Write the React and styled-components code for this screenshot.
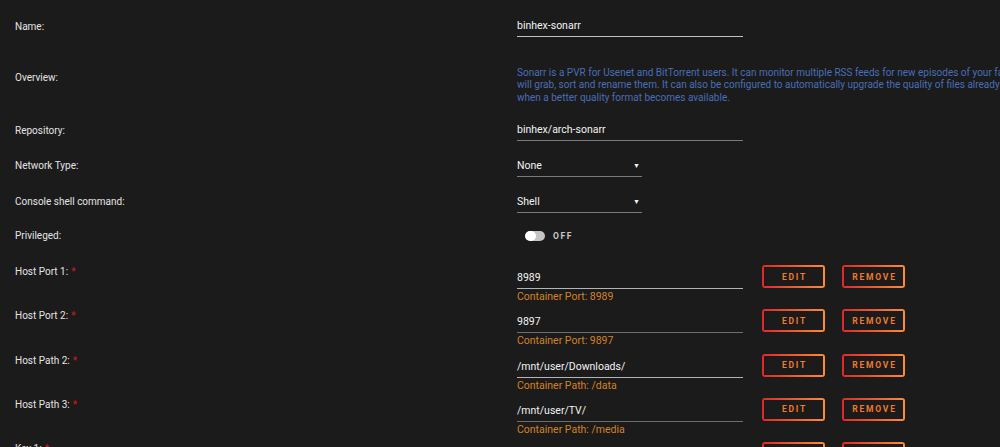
import React from 'react';
import styled, {createGlobalStyle} from 'styled-components';

const GlobalStyle = createGlobalStyle`
    html, body{
        margin: 0;
        padding: 0;
        background: #1c1b1b;
        overflow: hidden;
    }
    body{
        font-family: Roboto, "Noto Sans", sans-serif;
        color: #e4e2e4;
    }
`;

const Form = styled.div`
    display: flex;
    flex-direction: column;
    padding: 18px 0 0 15px;
    width: 1200px;
`;

const Row = styled.div`
    display: grid;
    grid-template-columns: 502px 1fr;
    align-items: start;
    height: ${props=>props.h}px;
`;

const Label = styled.div`
    font-size: 10px;
    line-height: 16px;
    color: #e4e2e4;
    padding-top: ${props=>props.pt || 0}px;

    .req{
        color: #d41b1b;
        margin-left: 3px;
    }
`;

const TextInput = styled.div`
    width: 226px;
    font-size: 10.5px;
    line-height: 16px;
    color: #f2f2f2;
    padding-bottom: 2px;
    border-bottom: 1px solid ${props=>props.line};
`;

const Overview = styled.div`
    font-size: 10px;
    line-height: 12.3px;
    color: #486dba;
    white-space: nowrap;
`;

const Select = styled.div`
    display: flex;
    justify-content: space-between;
    align-items: center;
    width: 125px;
    font-size: 10.5px;
    line-height: 16px;
    color: #f2f2f2;
    padding-bottom: 2px;
    border-bottom: 1px solid #7a7a7a;

    span{
        font-size: 7px;
        margin-right: 2px;
    }
`;

const SwitchWrap = styled.div`
    display: flex;
    align-items: center;
    gap: 8px;
    padding: 3px 0 0 8px;
`;

const Track = styled.div`
    display: flex;
    width: 20px;
    height: 10px;
    border-radius: 5px;
    background: #c4c4c4;
    overflow: hidden;

    &::before{
        content: '';
        width: 11px;
        height: 10px;
        border-radius: 5px;
        background: #ffffff;
    }
`;

const SwitchText = styled.span`
    font-size: 8.5px;
    font-weight: bold;
    letter-spacing: 1.6px;
    color: #c8c8c8;
`;

const EntryValue = styled.div`
    display: flex;
    align-items: flex-start;
    padding-top: 1px;
`;

const EntryField = styled.div`
    display: flex;
    flex-direction: column;
    margin-top: 5px;
    margin-right: 19px;
`;

const Hint = styled.div`
    font-size: 10.5px;
    line-height: 14px;
    margin-top: 1px;
    color: #d4821f;
`;

const Button = styled.div`
    display: flex;
    justify-content: center;
    align-items: center;
    box-sizing: border-box;
    width: 63px;
    height: 23px;
    margin-right: 17px;
    border-radius: 3px;
    font-size: 8.5px;
    font-weight: bold;
    letter-spacing: 1.8px;
    padding-left: 2px;
    color: #f07a2a;
    background:
        linear-gradient(90deg, #e22828, #ff8c2f) 0 0 / 100% 2px no-repeat,
        linear-gradient(90deg, #e22828, #ff8c2f) 0 100% / 100% 2px no-repeat,
        linear-gradient(#e22828, #e22828) 0 0 / 2px 100% no-repeat,
        linear-gradient(#ff8c2f, #ff8c2f) 100% 0 / 2px 100% no-repeat;
`;

const entries = [
    {label: 'Host Port 1:', value: '8989', hint: 'Container Port: 8989', line: '#b4b4b4'},
    {label: 'Host Port 2:', value: '9897', hint: 'Container Port: 9897', line: '#6e6e6e'},
    {label: 'Host Path 2:', value: '/mnt/user/Downloads/', hint: 'Container Path: /data', line: '#b4b4b4'},
    {label: 'Host Path 3:', value: '/mnt/user/TV/', hint: 'Container Path: /media', line: '#6e6e6e'},
    {label: 'Key 1:', value: '', hint: '', line: '#b4b4b4'},
];

export default function App(){
    return(
        <>
            <GlobalStyle/>
            <Form>
                <Row h={49}>
                    <Label pt={1}>Name:</Label>
                    <TextInput line="#c2c2c2">binhex-sonarr</TextInput>
                </Row>
                <Row h={55}>
                    <Label pt={3}>Overview:</Label>
                    <Overview>
                        Sonarr is a PVR for Usenet and BitTorrent users. It can monitor multiple RSS feeds for new episodes of your favorite shows and<br/>
                        will grab, sort and rename them. It can also be configured to automatically upgrade the quality of files already downloaded<br/>
                        when a better quality format becomes available.
                    </Overview>
                </Row>
                <Row h={36}>
                    <Label pt={1}>Repository:</Label>
                    <TextInput line="#7a7a7a">binhex/arch-sonarr</TextInput>
                </Row>
                <Row h={36}>
                    <Label>Network Type:</Label>
                    <Select>None<span>▼</span></Select>
                </Row>
                <Row h={34}>
                    <Label>Console shell command:</Label>
                    <Select>Shell<span>▼</span></Select>
                </Row>
                <Row h={36}>
                    <Label>Privileged:</Label>
                    <SwitchWrap>
                        <Track/>
                        <SwitchText>OFF</SwitchText>
                    </SwitchWrap>
                </Row>
                {entries.map(entry=>(
                    <Row h={44.33} key={entry.label}>
                        <Label>{entry.label}<span className="req">*</span></Label>
                        <EntryValue>
                            <EntryField>
                                <TextInput line={entry.line}>{entry.value || '\u00a0'}</TextInput>
                                <Hint>{entry.hint || '\u00a0'}</Hint>
                            </EntryField>
                            <Button>EDIT</Button>
                            <Button>REMOVE</Button>
                        </EntryValue>
                    </Row>
                ))}
            </Form>
        </>
    )
}
